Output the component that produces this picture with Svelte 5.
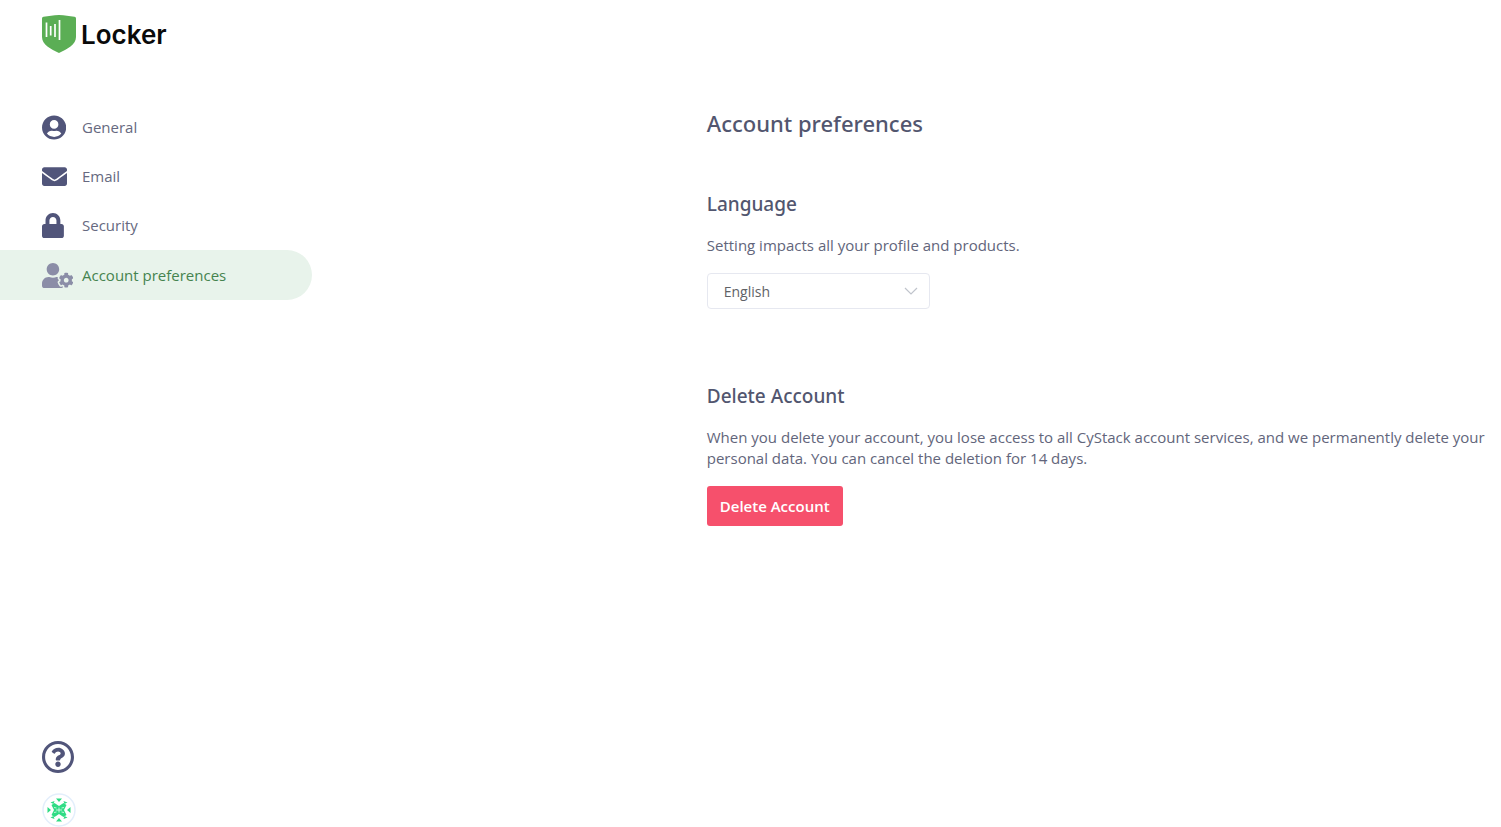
<script>
  let language = 'en';
  let active = 'preferences';

  const languages = [
    { value: 'en', label: 'English' },
    { value: 'vi', label: 'Tiếng Việt' }
  ];

  const menu = [
    {
      id: 'general',
      label: 'General',
      viewBox: '0 0 496 512',
      path: 'M248 8C111 8 0 119 0 256s111 248 248 248 248-111 248-248S385 8 248 8zm0 96c48.6 0 88 39.4 88 88s-39.4 88-88 88-88-39.4-88-88 39.4-88 88-88zm0 344c-58.7 0-111.3-26.6-146.5-68.2 18.8-35.4 55.6-59.8 98.5-59.8 2.4 0 4.8.4 7.1 1.1 13 4.2 26.6 6.9 40.9 6.9 14.3 0 28-2.7 40.9-6.9 2.3-.7 4.7-1.1 7.1-1.1 42.9 0 79.7 24.4 98.5 59.8C359.3 421.4 306.7 448 248 448z'
    },
    {
      id: 'email',
      label: 'Email',
      viewBox: '0 0 512 512',
      path: 'M502.3 190.8c3.9-3.1 9.7-.2 9.7 4.7V400c0 26.5-21.5 48-48 48H48c-26.5 0-48-21.5-48-48V195.6c0-5 5.7-7.8 9.7-4.7 22.4 17.4 52.1 39.5 154.1 113.6 21.1 15.4 56.7 47.8 92.2 47.6 35.7.3 72-32.8 92.3-47.6 102-74.1 131.6-96.3 154-113.7zM256 320c23.2.4 56.6-29.2 73.4-41.4 132.7-96.3 142.8-104.7 173.4-128.7 5.8-4.5 9.2-11.5 9.2-18.9v-19c0-26.5-21.5-48-48-48H48c-26.5 0-48 21.5-48 48v19c0 7.4 3.4 14.3 9.2 18.9 30.6 23.9 40.7 32.4 173.4 128.7 16.8 12.2 50.2 41.8 73.4 41.4z'
    },
    {
      id: 'security',
      label: 'Security',
      viewBox: '0 0 448 512',
      path: 'M400 224h-24v-72C376 68.2 307.8 0 224 0S72 68.2 72 152v72H48c-26.5 0-48 21.5-48 48v192c0 26.5 21.5 48 48 48h352c26.5 0 48-21.5 48-48V272c0-26.5-21.5-48-48-48zm-104 0H152v-72c0-39.7 32.3-72 72-72s72 32.3 72 72v72z'
    },
    {
      id: 'preferences',
      label: 'Account preferences',
      viewBox: '0 0 640 512',
      path: 'M610.5 373.3c2.6-14.1 2.6-28.5 0-42.6l25.8-14.9c3-1.7 4.3-5.2 3.3-8.5-6.7-21.6-18.2-41.2-33.2-57.4-2.3-2.5-6-3.1-9-1.4l-25.8 14.9c-10.9-9.3-23.4-16.5-36.9-21.3v-29.8c0-3.4-2.4-6.4-5.7-7.1-22.3-5-45-4.8-66.2 0-3.3.7-5.7 3.7-5.7 7.1v29.8c-13.5 4.8-26 12-36.9 21.3l-25.8-14.9c-2.9-1.7-6.7-1.1-9 1.4-15 16.2-26.5 35.8-33.2 57.4-1 3.3.4 6.8 3.3 8.5l25.8 14.9c-2.6 14.1-2.6 28.5 0 42.6l-25.8 14.9c-3 1.7-4.3 5.2-3.3 8.5 6.7 21.6 18.2 41.1 33.2 57.4 2.3 2.5 6 3.1 9 1.4l25.8-14.9c10.9 9.3 23.4 16.5 36.9 21.3v29.8c0 3.4 2.4 6.4 5.7 7.1 22.3 5 45 4.8 66.2 0 3.3-.7 5.7-3.7 5.7-7.1v-29.8c13.5-4.8 26-12 36.9-21.3l25.8 14.9c2.9 1.7 6.7 1.1 9-1.4 15-16.2 26.5-35.8 33.2-57.4 1-3.3-.4-6.8-3.3-8.5l-25.8-14.9zM496 400.5c-26.8 0-48.5-21.8-48.5-48.5s21.8-48.5 48.5-48.5 48.5 21.8 48.5 48.5-21.7 48.5-48.5 48.5zM224 256c70.7 0 128-57.3 128-128S294.7 0 224 0 96 57.3 96 128s57.3 128 128 128zm201.2 226.5c-2.3-1.2-4.6-2.6-6.8-3.9l-7.9 4.6c-6 3.4-12.8 5.3-19.6 5.3-10.9 0-21.4-4.6-28.9-12.6-18.3-19.8-32.3-43.9-40.2-69.6-5.5-17.7 1.9-36.4 17.9-45.7l7.9-4.6c-.1-2.6-.1-5.2 0-7.8l-7.9-4.6c-16-9.2-23.4-28-17.9-45.7.9-2.9 2.2-5.8 3.2-8.7-3.8-.3-7.5-1.2-11.4-1.2h-16.7c-22.2 10.2-46.9 16-72.9 16s-50.6-5.8-72.9-16h-16.7C60.2 288 0 348.2 0 422.4V464c0 26.5 21.5 48 48 48h352c10.1 0 19.5-3.2 27.2-8.5-1.2-3.8-2-7.7-2-11.8v-9.2z'
    }
  ];
</script>

<div class="page">
  <aside class="sidebar">
    <a class="logo" href="#home">
      <svg class="logo-shield" viewBox="0 0 34 39" aria-hidden="true">
        <path fill="#5bae55" d="M0 4.500Q0 3 1.500 2.800C7 2.300 11 1 17 1s10 1.300 15.500 1.800Q34 3 34 4.500V23c0 8-9 12-17 16C9 35 0 31 0 23z" />
        <path stroke="#fff" stroke-width="1.7" d="M4.500 8.500v14.500M8.700 12v9.500M13 10v13M17.500 6v20" />
      </svg>
      <span class="logo-text">Locker</span>
    </a>

    <nav class="menu">
      {#each menu as item}
        <a
          class="menu-item"
          class:active={active === item.id}
          href="#{item.id}"
          on:click={() => (active = item.id)}
        >
          <span class="menu-icon">
            <svg viewBox={item.viewBox} aria-hidden="true"><path d={item.path} /></svg>
          </span>
          <span>{item.label}</span>
        </a>
      {/each}
    </nav>

    <div class="sidebar-footer">
      <button class="round-button" type="button" aria-label="Help">
        <svg class="help-icon" viewBox="8 8 496 496" aria-hidden="true">
          <path d="M256 8C119.043 8 8 119.083 8 256c0 136.997 111.043 248 248 248s248-111.003 248-248C504 119.083 392.957 8 256 8zm0 448c-110.532 0-200-89.431-200-200 0-110.495 89.472-200 200-200 110.491 0 200 89.471 200 200 0 110.53-89.431 200-200 200zm107.244-255.2c0 67.052-72.421 68.084-72.421 92.863V300c0 6.627-5.373 12-12 12h-45.647c-6.627 0-12-5.373-12-12v-8.659c0-35.745 27.1-50.034 47.579-61.516 17.561-9.845 28.324-16.541 28.324-29.579 0-17.246-21.999-28.693-39.784-28.693-23.189 0-33.894 10.977-48.942 29.969-4.057 5.12-11.46 6.071-16.666 2.124l-27.824-21.098c-5.107-3.872-6.251-11.066-2.644-16.363C184.846 131.491 214.94 112 261.794 112c49.071 0 101.45 38.304 101.45 88.8zM298 368c0 23.159-18.841 42-42 42s-42-18.841-42-42 18.841-42 42-42 42 18.841 42 42z" />
        </svg>
      </button>
      <button class="round-button" type="button" aria-label="Account">
        <svg class="avatar" viewBox="0 0 34 34" aria-hidden="true">
          <circle cx="17" cy="17" r="16" fill="#fff" stroke="#e3eefb" stroke-width="1.500" />
          <g fill="#2fdc84">
            <path d="M14 5.500h6L17 9zM14 28.500h6L17 25zM5.500 14v6L9 17zM28.500 14v6L25 17z" />
            <path d="M8.500 9.500l4-1.500-1 3zM25.500 9.500l-4-1.500 1 3zM8.500 24.500l4 1.500-1-3zM25.500 24.500l-4 1.500 1-3z" />
            <path d="M9.500 12l3-2L17 13l4.500-3 3 2-2.500 5 2.500 5-3 2-4.500-3-4.500 3-3-2 2.500-5z" />
          </g>
          <path fill="none" stroke="#fff" stroke-width=".7" d="M14 17h6M17 14.500v5M12 14.500l2.500.5M22 14.500l-2.500.5M12 19.500l2.500-.5M22 19.500l-2.500-.5" />
        </svg>
      </button>
    </div>
  </aside>

  <main class="content">
    <h1>Account preferences</h1>

    <section>
      <h2><label for="language">Language</label></h2>
      <p>Setting impacts all your profile and products.</p>
      <div class="select-box">
        <select id="language" bind:value={language}>
          {#each languages as lang}
            <option value={lang.value}>{lang.label}</option>
          {/each}
        </select>
        <svg class="chevron" viewBox="0 0 14 8" aria-hidden="true">
          <path d="M1 1l6 6 6-6" />
        </svg>
      </div>
    </section>

    <section>
      <h2>Delete Account</h2>
      <p>
        When you delete your account, you lose access to all CyStack account services, and we
        permanently delete your personal data. You can cancel the deletion for 14 days.
      </p>
      <button class="delete-button" type="button">Delete Account</button>
    </section>
  </main>
</div>

<style>
  :global(body) {
    background: #fff;
  }

  .page {
    display: flex;
    min-height: 100vh;
    font-family: 'Segoe UI', 'Open Sans', 'Noto Sans', sans-serif;
    font-size: 15px;
    line-height: 21px;
    color: #52566f;
  }

  .sidebar {
    display: flex;
    flex-direction: column;
    flex: 0 0 312px;
  }

  .logo {
    display: flex;
    align-items: flex-start;
    gap: 5px;
    padding: 14px 0 0 42px;
    text-decoration: none;
    color: #0a0a0a;
  }

  .logo-shield {
    width: 34px;
    height: 39px;
    fill: none;
  }

  .logo-text {
    font-family: Inter, 'Open Sans', sans-serif;
    font-size: 26px;
    font-weight: 600;
    line-height: 41px;
  }

  .menu {
    display: flex;
    flex-direction: column;
    margin-top: 48px;
  }

  .menu-item {
    display: flex;
    align-items: center;
    height: 49px;
    padding-left: 42px;
    border-radius: 0 25px 25px 0;
    color: #666980;
    text-decoration: none;
  }

  .menu-item.active {
    height: 50px;
    background: #e8f3eb;
    color: #45834f;
  }

  .menu-icon {
    display: flex;
    width: 40px;
    fill: #51557a;
  }

  .menu-icon svg {
    height: 25px;
  }

  .active .menu-icon {
    fill: #8b8da7;
  }

  .sidebar-footer {
    display: flex;
    flex-direction: column;
    align-items: flex-start;
    gap: 20px;
    margin-top: auto;
    padding-left: 42px;
  }

  .round-button {
    display: flex;
    padding: 0;
    border: none;
    border-radius: 50%;
    background: none;
    cursor: pointer;
  }

  .help-icon {
    width: 32px;
    height: 32px;
    fill: #51557a;
  }

  .avatar {
    width: 34px;
    height: 34px;
  }

  .content {
    flex: 1;
    min-width: 0;
    padding: 108px 15px 32px;
    margin-left: clamp(0px, 25.3vw, 480px);
  }

  h1,
  h2 {
    font-family: 'Segoe UI', 'Noto Sans', 'Open Sans', sans-serif;
    font-weight: 500;
  }

  h1 {
    margin: 0;
    font-size: 22px;
    line-height: 30px;
  }

  section {
    margin-top: 52px;
  }

  section + section {
    margin-top: 73px;
  }

  h2 {
    margin: 0 0 17px;
    font-size: 19px;
    line-height: 28px;
  }

  p {
    margin: 0 0 17px;
    color: #62657b;
  }

  .select-box {
    position: relative;
    width: 223px;
  }

  select {
    display: block;
    width: 100%;
    height: 36px;
    padding: 0 36px 0 16px;
    border: 1px solid #e6e8f0;
    border-radius: 4px;
    appearance: none;
    background: #fff;
    color: #606266;
    font-family: inherit;
    font-size: 14px;
  }

  .chevron {
    position: absolute;
    top: 14px;
    right: 12px;
    width: 14px;
    height: 8px;
    fill: none;
    stroke: #c0c4cc;
    stroke-width: 1.2;
    pointer-events: none;
  }

  .delete-button {
    height: 40px;
    padding: 0 13px;
    border: none;
    border-radius: 3px;
    background: #f6506c;
    color: #fff;
    font-family: inherit;
    font-size: 15px;
    font-weight: 600;
    cursor: pointer;
  }

  @media (max-width: 900px) {
    .page {
      flex-direction: column;
    }

    .sidebar {
      flex: none;
    }

    .content {
      margin-left: 0;
      padding: 32px 42px;
    }
  }
</style>
